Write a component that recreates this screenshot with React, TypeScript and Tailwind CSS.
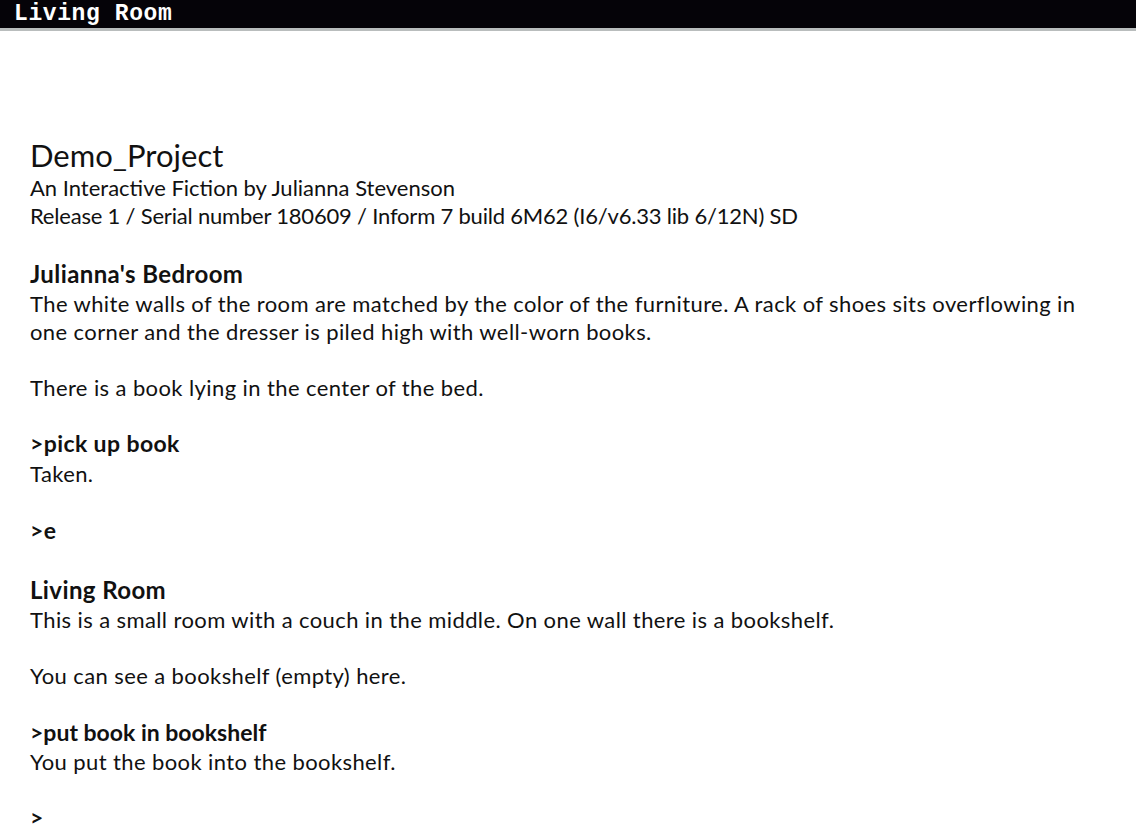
import React from 'react';

export default function App() {
  const body = "font-['Lato',sans-serif] text-[22px] leading-[28px] tracking-[0.4px] text-[#111]";
  const cmd = 'font-bold text-[23px] leading-[30px]';
  const room = 'font-bold text-[24px] leading-[30px]';

  return (
    <div className="w-[1136px] h-[834px] bg-white overflow-hidden">
      <div className="h-[28px] bg-[#050308] border-b-[3px] border-[#b9bdbd] box-content flex items-center px-[14px]">
        <span className="font-['Liberation_Mono',monospace] font-bold text-[23px] text-white leading-none tracking-[0.6px]">
          Living Room
        </span>
      </div>

      <div className={`px-[30px] pt-[105px] ${body}`}>
        <h1 className="text-[31px] leading-[38px] tracking-normal">Demo_Project</h1>
        <p className="tracking-normal">An Interactive Fiction by Julianna Stevenson</p>
        <p className="tracking-[-0.2px]">
          Release 1 / Serial number 180609 / Inform 7 build 6M62 (I6/v6.33 lib 6/12N) SD
        </p>

        <p className={`mt-[29px] ${room}`}>Julianna's Bedroom</p>
        <p className="mt-[1px]">
          The white walls of the room are matched by the color of the furniture. A rack of shoes sits overflowing in
          <br />
          one corner and the dresser is piled high with well-worn books.
        </p>
        <p className="mt-[28px]">There is a book lying in the center of the bed.</p>

        <p className={`mt-[26px] ${cmd}`}>&gt;pick up book</p>
        <p className="mt-[2px]">Taken.</p>

        <p className={`mt-[27px] ${cmd}`}>&gt;e</p>

        <p className={`mt-[30px] ${room}`}>Living Room</p>
        <p className="mt-[1px]">This is a small room with a couch in the middle. On one wall there is a bookshelf.</p>
        <p className="mt-[28px]">You can see a bookshelf (empty) here.</p>

        <p className={`mt-[27px] ${cmd} tracking-[0px]`}>&gt;put book in bookshelf</p>
        <p className="mt-[1px]">You put the book into the bookshelf.</p>

        <p className={`mt-[26px] ${cmd}`}>&gt;</p>
      </div>
    </div>
  );
}
